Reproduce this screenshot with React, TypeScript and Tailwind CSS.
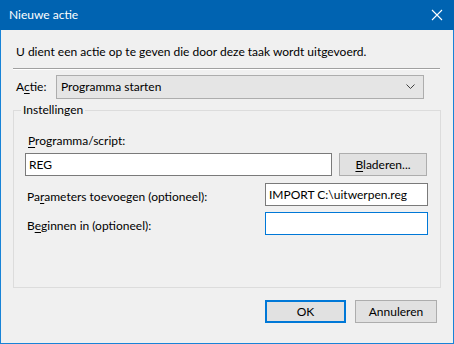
import React from 'react';

const font = { fontFamily: 'Lato, "Segoe UI", "Liberation Sans", sans-serif' };

function U({ children }: { children: React.ReactNode }) {
  return <span className="underline underline-offset-2">{children}</span>;
}

function Btn({ children, primary }: { children: React.ReactNode; primary?: boolean }) {
  return (
    <button
      className={`w-full h-[23px] bg-[#e1e1e1] text-[12px] text-black flex items-center justify-center ${
        primary ? 'border-2 border-[#0078d7]' : 'border border-[#adadad]'
      }`}
    >
      {children}
    </button>
  );
}

export default function App() {
  return (
    <div className="w-[454px] h-[344px] flex flex-col bg-[#1883d7] text-[12px] text-black" style={font}>
      {/* Titelbalk */}
      <div className="h-[30px] bg-[#0063b1] flex items-center justify-between pl-[9px] pr-[10px] text-white">
        <span className="text-[12px]">Nieuwe actie</span>
        <svg width="12" height="12" viewBox="0 0 12 12" className="mr-[1px]">
          <path d="M1 1 L11 11 M11 1 L1 11" stroke="white" strokeWidth="1.1" />
        </svg>
      </div>

      {/* Inhoud */}
      <div className="flex-1 mx-[1px] mb-[1px] bg-[#f0f0f0] flex flex-col">
        <p className="mt-[14px] ml-[15px] leading-[16px]">
          U dient een actie op te geven die door deze taak wordt uitgevoerd.
        </p>

        <div className="mt-[8px] ml-[12px] w-[427px] border-t border-[#a0a0a0] border-b border-b-white" />

        <div className="mt-[5px] ml-[15px] flex items-center h-[24px]">
          <span className="w-[40px]">
            A<U>c</U>tie:
          </span>
          <div className="w-[368px] h-[24px] border border-[#adadad] bg-[#e5e5e5] flex items-center justify-between pl-[4px] pr-[8px]">
            <span>Programma starten</span>
            <svg width="9" height="6" viewBox="0 0 9 6">
              <path d="M0.5 0.5 L4.5 4.5 L8.5 0.5" stroke="#404040" fill="none" strokeWidth="1" />
            </svg>
          </div>
        </div>

        <fieldset className="mt-[3px] ml-[12px] w-[428px] h-[186px] border border-[#dcdcdc] pl-[11px] pr-[12px]">
          <legend className="ml-[-4px] px-[2px] leading-[16px]">Instellingen</legend>

          <div className="mt-[15px] ml-[3px] leading-[16px]">
            <U>P</U>rogramma/script:
          </div>

          <div className="mt-[4px] flex items-center">
            <div className="w-[307px] h-[23px] bg-white border border-[#7a7a7a] flex items-center pl-[3px]">REG</div>
            <div className="ml-[7px] w-[88px]">
              <Btn>
                <span>
                  <U>B</U>laderen...
                </span>
              </Btn>
            </div>
          </div>

          <div className="mt-[7px] flex items-center">
            <span className="w-[238px] ml-[2px] pt-[4px]">
              Pa<U>r</U>ameters toevoegen (optioneel):
            </span>
            <div className="w-[163px] h-[23px] bg-white border border-[#7a7a7a] flex items-center pl-[3px]">
              IMPORT C:\uitwerpen.reg
            </div>
          </div>

          <div className="mt-[6px] flex items-center">
            <span className="w-[238px] ml-[2px] pt-[4px]">
              B<U>e</U>ginnen in (optioneel):
            </span>
            <div className="w-[163px] h-[23px] bg-white border border-[#0078d7]" />
          </div>
        </fieldset>

        <div className="mt-[12px] ml-[264px] flex gap-[9px]">
          <div className="w-[81px]">
            <Btn primary>OK</Btn>
          </div>
          <div className="w-[82px]">
            <Btn>Annuleren</Btn>
          </div>
        </div>
      </div>
    </div>
  );
}
